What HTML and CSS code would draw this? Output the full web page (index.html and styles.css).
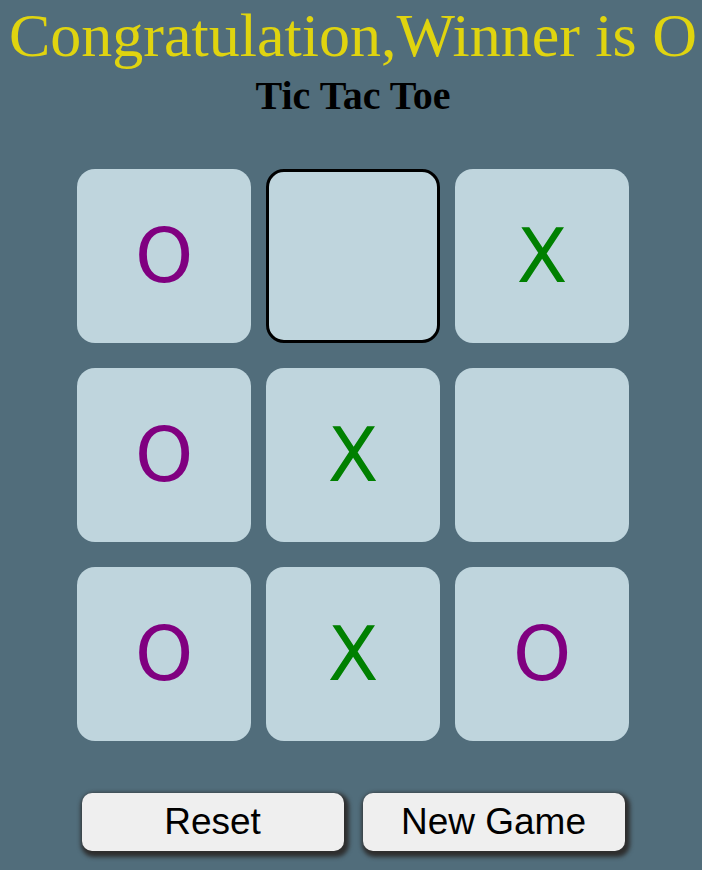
FILE: index.html
```html
<!DOCTYPE html>
<html lang="en">

<head>
    <meta charset="UTF-8">
    <meta name="viewport" content="width=device-width, initial-scale=1.0">
    <title>Tic Tac Toe</title>
    <link rel="stylesheet" href="styles.css">
</head>

<body>
    <h1 class="msg">Congratulation,Winner is O</h1>
    <h2 class="title">Tic Tac Toe</h2>

    <div class="board">
        <button class="box o">O</button>
        <button class="box active"></button>
        <button class="box x">X</button>
        <button class="box o">O</button>
        <button class="box x">X</button>
        <button class="box"></button>
        <button class="box o">O</button>
        <button class="box x">X</button>
        <button class="box o">O</button>
    </div>

    <div class="controls">
        <button class="btn">Reset</button>
        <button class="btn">New Game</button>
    </div>
</body>

</html>
```

FILE: styles.css
```css
body {
    margin: 0;
    padding: 0 0 19px 4px;
    background-color: #516d7b;
    font-family: "Liberation Serif", serif;
    text-align: center;
}

.msg {
    margin: 0;
    color: #e0d40f;
    font-size: 62px;
    font-weight: normal;
    white-space: nowrap;
}

.title {
    margin: 1px 0 0;
    color: #000;
    font-size: 40px;
}

.board {
    display: grid;
    grid-template-columns: repeat(3, 174px);
    grid-auto-rows: 174px;
    column-gap: 15px;
    row-gap: 25px;
    justify-content: center;
    margin-top: 50px;
}

.box {
    box-sizing: border-box;
    border: none;
    border-radius: 18px;
    background-color: #bfd5dd;
    font-family: "DejaVu Sans", sans-serif;
    font-size: 74px;
    padding: 0;
}

.box.active {
    border: 3px solid #000;
}

.o {
    color: #800080;
}

.x {
    color: #008000;
}

.controls {
    display: flex;
    justify-content: center;
    gap: 19px;
    margin-top: 52px;
}

.btn {
    width: 262px;
    height: 58px;
    border: none;
    border-radius: 10px;
    background-color: #efefef;
    box-shadow: 2px 3px 4px 3px #2e2e2e;
    font-family: "Liberation Sans", Arial, sans-serif;
    font-size: 37px;
    color: #000;
    cursor: pointer;
}
```
